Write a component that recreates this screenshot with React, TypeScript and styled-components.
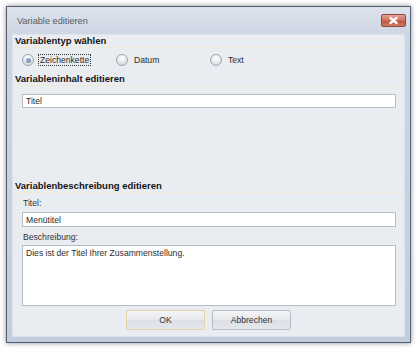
import { FunctionComponent } from "react";
import styled, { createGlobalStyle } from "styled-components";

const GlobalStyle = createGlobalStyle`
  html, body {
    margin: 0;
    padding: 0;
    background: #ffffff;
  }
  body {
    font-family: "Liberation Sans", Arial, sans-serif;
    font-size: 8.6px;
    color: #2b2b2b;
  }
`;

interface RadioOption {
  label: string;
  checked?: boolean;
}

const radioOptions: RadioOption[] = [
  { label: "Zeichenkette", checked: true },
  { label: "Datum" },
  { label: "Text" },
];

const App: FunctionComponent = () => {
  return (
    <>
      <GlobalStyle />
      <Page>
        <Window>
          <TitleBar>
            <Title>Variable editieren</Title>
            <CloseButton>
              <svg width="11" height="9" viewBox="0 0 11 9">
                <path
                  d="M2.5 2 L8.5 7 M8.5 2 L2.5 7"
                  stroke="#ffffff"
                  strokeWidth="2.4"
                  strokeLinecap="round"
                />
              </svg>
            </CloseButton>
          </TitleBar>
          <Content>
            <Heading>Variablentyp wählen</Heading>
            <RadioRow>
              {radioOptions.map((opt) => (
                <RadioItem key={opt.label}>
                  <RadioCircle checked={!!opt.checked} />
                  <RadioLabel focused={!!opt.checked}>{opt.label}</RadioLabel>
                </RadioItem>
              ))}
            </RadioRow>

            <Heading spaced>Variableninhalt editieren</Heading>
            <TextBox>Titel</TextBox>

            <Heading gap={72}>Variablenbeschreibung editieren</Heading>
            <FieldLabel>Titel:</FieldLabel>
            <TextBox small>Menütitel</TextBox>
            <FieldLabel>Beschreibung:</FieldLabel>
            <TextArea>Dies ist der Titel Ihrer Zusammenstellung.</TextArea>

            <ButtonRow>
              <Button focused>OK</Button>
              <Button>Abbrechen</Button>
            </ButtonRow>
          </Content>
        </Window>
      </Page>
    </>
  );
};

const Page = styled.div`
  width: 418px;
  height: 350px;
  box-sizing: border-box;
  padding: 6px 7px 7px 6px;
`;

const Window = styled.div`
  height: 100%;
  box-sizing: border-box;
  display: flex;
  flex-direction: column;
  border: 1px solid #555d6b;
  border-right-color: #56657f;
  border-bottom-color: #4d5c7a;
  background: linear-gradient(to bottom, #dce3ec 0px, #cdd6e3 28px, #c3cddc 100%);
  box-shadow: 0 0 5px rgba(0, 0, 0, 0.45);
`;

const TitleBar = styled.div`
  height: 27px;
  display: flex;
  align-items: center;
  justify-content: space-between;
  padding: 0 4px 0 10px;
`;

const Title = styled.span`
  font-size: 9.2px;
  color: #5a5a5a;
`;

const CloseButton = styled.div`
  width: 25px;
  height: 13px;
  box-sizing: border-box;
  border: 1px solid #8e4a40;
  border-radius: 2px;
  display: flex;
  align-items: center;
  justify-content: center;
  background: linear-gradient(to bottom, #e2a196 0%, #cf6d5c 50%, #bf4f3c 51%, #d07a62 100%);
`;

const Content = styled.div`
  flex: 1;
  margin: 0 5px 5px 5px;
  display: flex;
  flex-direction: column;
  background: #e9ecf1;
  border: 1px solid #dde3ec;
`;

interface HeadingProps {
  spaced?: boolean;
  gap?: number;
}

const Heading = styled.div<HeadingProps>`
  height: 12px;
  line-height: 12px;
  margin-top: ${(p) => (p.gap ? `${p.gap}px` : p.spaced ? "6px" : "0")};
  padding-left: 2px;
  font-size: 9.5px;
  font-weight: bold;
  color: #151515;
  border-bottom: 1px solid #efe9d3;
`;

const RadioRow = styled.div`
  display: flex;
  height: 14px;
  margin-top: 5px;
  padding-left: 9px;
`;

const RadioItem = styled.div`
  width: 94px;
  display: flex;
  align-items: center;
  gap: 4px;
`;

interface RadioCircleProps {
  checked: boolean;
}

const RadioCircle = styled.span<RadioCircleProps>`
  position: relative;
  width: 12px;
  height: 12px;
  box-sizing: border-box;
  border-radius: 50%;
  border: 1px solid #a0a7b2;
  background: radial-gradient(circle at 50% 30%, #ffffff 0%, #e7eaee 50%, #c9ced6 100%);
  &::after {
    content: "";
    display: ${(p) => (p.checked ? "block" : "none")};
    position: absolute;
    left: 2.5px;
    top: 2.5px;
    width: 5px;
    height: 5px;
    border-radius: 50%;
    background: radial-gradient(circle at 40% 35%, #a6b4cc 0%, #6a7fa3 100%);
  }
`;

interface RadioLabelProps {
  focused: boolean;
}

const RadioLabel = styled.span<RadioLabelProps>`
  padding: 0 1px;
  line-height: 10px;
  color: #2b2b2b;
  border: 1px dotted ${(p) => (p.focused ? "#333333" : "transparent")};
`;

interface TextBoxProps {
  small?: boolean;
}

const TextBox = styled.div<TextBoxProps>`
  height: ${(p) => (p.small ? "15px" : "14px")};
  box-sizing: border-box;
  margin: ${(p) => (p.small ? "3px" : "8px")} 8px 0 9px;
  padding-left: 3px;
  display: flex;
  align-items: center;
  background: #ffffff;
  border: 1px solid #b6bcc6;
  color: #2b2b2b;
`;

const FieldLabel = styled.div`
  height: 12px;
  line-height: 12px;
  margin-top: 4px;
  padding-left: 10px;
  color: #333333;
`;

const TextArea = styled.div`
  height: 61px;
  box-sizing: border-box;
  margin: 2px 8px 0 9px;
  padding: 2px 3px;
  background: #ffffff;
  border: 1px solid #b6bcc6;
  color: #2b2b2b;
`;

const ButtonRow = styled.div`
  display: flex;
  justify-content: center;
  gap: 7px;
  margin-top: 4px;
`;

interface ButtonProps {
  focused?: boolean;
}

const Button = styled.div<ButtonProps>`
  width: 79px;
  height: 20px;
  box-sizing: border-box;
  display: flex;
  align-items: center;
  justify-content: center;
  border-radius: 2px;
  border: 1px solid ${(p) => (p.focused ? "#e3d4a6" : "#b7bdc7")};
  background: linear-gradient(to bottom, #f4f5f7 0%, #e6e8ec 50%, #dcdfe5 51%, #e4e7eb 100%);
  color: #333333;
`;

export default App;
